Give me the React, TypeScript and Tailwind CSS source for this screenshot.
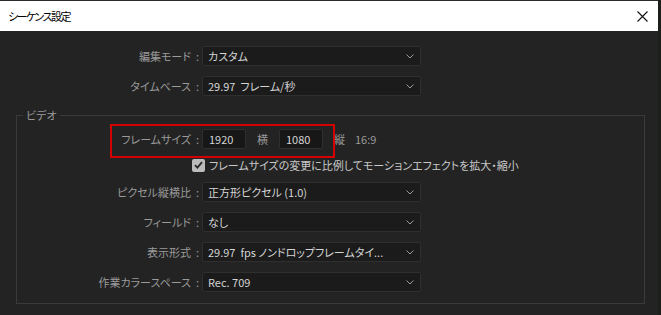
import React from 'react';

const font = "font-['Noto_Sans_CJK_JP','Liberation_Sans',sans-serif] [font-feature-settings:'palt']";

const Chevron = () => (
  <svg width="8" height="5" viewBox="0 0 8 5" className="ml-auto mr-[6px] shrink-0">
    <path d="M0.5 0.5 L4 4 L7.5 0.5" fill="none" stroke="#9a9a9a" strokeWidth="1" />
  </svg>
);

const Select = ({ value }: { value: string }) => (
  <div className="flex items-center w-[219px] h-[20px] bg-[#1b1b1b] border border-[#2f2f2f] rounded-[2px]">
    <span className="pl-[5px] text-[#d4d4d4] text-[11px] leading-none whitespace-pre">{value}</span>
    <Chevron />
  </div>
);

const Label = ({ text, width }: { text: string; width: string }) => (
  <div className={`${width} flex justify-end items-center pr-[3px] text-[#9a9a9a] text-[11px] leading-none whitespace-nowrap`}>
    <span>{text}</span>
    <span className="ml-[5px]">:</span>
  </div>
);

// label column right edge is at x=198 on the page
const Row = ({ label, value, labelWidth }: { label: string; value: string; labelWidth: string }) => (
  <div className="flex items-center h-[20px]">
    <Label text={label} width={labelWidth} />
    <Select value={value} />
  </div>
);

const NumBox = ({ value }: { value: string }) => (
  <div className="flex items-center w-[44px] h-[20px] bg-[#171717] border border-[#2f2f2f] rounded-[2px] pl-[6px] text-[#d4d4d4] text-[11px] leading-none">
    {value}
  </div>
);

export default function App() {
  return (
    <div className={`${font} w-[661px] h-[315px] bg-[#1d1f1b] flex overflow-hidden`}>
      <div className="w-[658px] h-[315px] flex flex-col bg-[#232323] border-t border-[#2a2a2a]">
        {/* title bar */}
        <div className="h-[30px] bg-white flex items-center pl-[8px] pr-[10px] shrink-0">
          <span className="text-[11px] tracking-[-1.5px] text-black leading-none">シーケンス設定</span>
          <svg width="11" height="11" viewBox="0 0 11 11" className="ml-auto">
            <path d="M0.5 0.5 L10.5 10.5 M10.5 0.5 L0.5 10.5" stroke="#111" strokeWidth="1.1" />
          </svg>
        </div>

        <div className="flex flex-col gap-[10px] pt-[15px]">
          <Row label="編集モード" value="カスタム" labelWidth="w-[202px]" />
          <Row label="タイムベース" value="29.97  フレーム/秒" labelWidth="w-[202px]" />
        </div>

        <fieldset className="mt-[14px] ml-[16px] w-[629px] h-[194px] border border-[#3a3a3a] relative">
          <legend className="ml-[6px] px-[3px] text-[#9a9a9a] text-[11px] leading-none">ビデオ</legend>

          {/* highlight annotation */}
          <div className="absolute left-[93px] top-[3px] w-[225px] h-[34px] border-2 border-[#d40000]" />

          <div className="flex flex-col pt-[8px]">
            <div className="flex items-center h-[20px]">
              <Label text="フレームサイズ" width="w-[185px]" />
              <NumBox value="1920" />
              <span className="w-[33px] text-center text-[#9a9a9a] text-[11px] leading-none">横</span>
              <NumBox value="1080" />
              <span className="ml-[11px] text-[#9a9a9a] text-[11px] leading-none">縦</span>
              <span className="ml-[10px] text-[#9a9a9a] text-[11px] leading-none">16:9</span>
            </div>

            <div className="flex items-center h-[14px] mt-[9px] pl-[175px]">
              <div className="w-[13px] h-[13px] bg-[#bcbcbc] rounded-[2px] flex items-center justify-center">
                <svg width="9" height="8" viewBox="0 0 9 8">
                  <path d="M1 4.2 L3.4 6.6 L8 1.2" fill="none" stroke="#2a2a2a" strokeWidth="1.8" />
                </svg>
              </div>
              <span className="ml-[4px] text-[#c8c8c8] text-[11px] leading-none whitespace-nowrap">フレームサイズの変更に比例してモーションエフェクトを拡大・縮小</span>
            </div>

            <div className="flex flex-col gap-[10px] mt-[10px]">
              <Row label="ピクセル縦横比" value="正方形ピクセル (1.0)" labelWidth="w-[185px]" />
              <Row label="フィールド" value="なし" labelWidth="w-[185px]" />
              <Row label="表示形式" value="29.97  fps ノンドロップフレームタイ..." labelWidth="w-[185px]" />
              <Row label="作業カラースペース" value="Rec. 709" labelWidth="w-[185px]" />
            </div>
          </div>
        </fieldset>
      </div>
    </div>
  );
}
